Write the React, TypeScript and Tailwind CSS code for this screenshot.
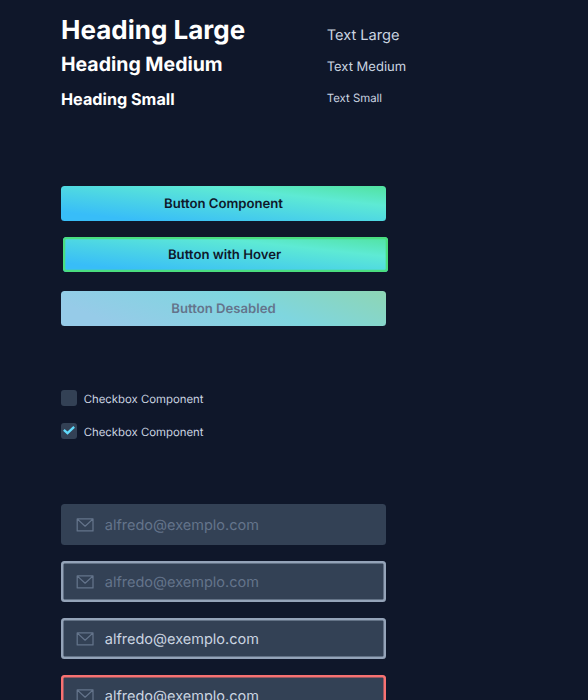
import type { ReactNode } from "react";

const buttonBase =
  "flex w-[325px] items-center justify-center rounded-[3.5px] pt-[2px] text-[13.15px] font-semibold leading-none [text-rendering:inherit]";

const gradient =
  "bg-[linear-gradient(to_top_right,#38bdf8_13%,#5eead4_72%,#4ade80_117%)]";

function Checkbox({ checked = false }: { checked?: boolean }) {
  return (
    <label className="flex h-4 items-center gap-[6.7px] text-[11.37px] leading-4 text-[#cbd5e1]">
      <span className="flex size-4 items-center justify-center rounded-[3px] bg-[#334155]">
        {checked && (
          <svg width="12" height="9" viewBox="0 0 12 9" fill="none">
            <path d="M1.7 4.6 4.5 7.1 10.3 1.6" stroke="#61dafb" strokeWidth="2.3" strokeLinecap="square" />
          </svg>
        )}
      </span>
      <span className="mt-[2px]">Checkbox Component</span>
    </label>
  );
}

function Field({ className, children }: { className: string; children: ReactNode }) {
  return (
    <div className={`flex h-[41px] w-[325px] shrink-0 items-center rounded-[3.5px] bg-[#334155] pl-[14.6px] text-[14.5px] ${className}`}>
      <svg className="mt-px" width="18" height="14" viewBox="0 0 18 14" fill="none" stroke="#64748b" strokeWidth="1.25" strokeLinejoin="round" strokeLinecap="round">
        <path d="M1.2 .9h15.8v12H1.2zM1.4 1.1 9.1 8.2l7.7-7.1" />
      </svg>
      <span className="ml-[11.2px] mt-[3px] leading-5">{children}</span>
    </div>
  );
}

export default function App() {
  return (
    <main className="h-[700px] w-[588px] overflow-hidden bg-[#0f172a] pl-[61px] font-['Inter',sans-serif] [text-rendering:geometricPrecision]">
      <section className="flex h-[185.7px]">
        <div className="w-[265.7px] whitespace-nowrap font-bold text-white">
          <h1 className="mt-[15px] text-[26px] leading-8">Heading Large</h1>
          <h2 className="mt-[5px] text-[19.5px] leading-6">Heading Medium</h2>
          <h3 className="mt-[13px] text-[16.2px] leading-5">Heading Small</h3>
        </div>
        <div className="whitespace-nowrap text-[#cbd5e1]">
          <p className="mt-[25px] text-[14.6px] leading-5">Text Large</p>
          <p className="mt-[12px] text-[13px] leading-5">Text Medium</p>
          <p className="mt-[13px] text-[11.4px] leading-4">Text Small</p>
        </div>
      </section>

      <section className="h-[204.8px] text-[#0f172a]">
        <button className={`${buttonBase} ${gradient} h-[35px]`}>Button Component</button>
        <button className={`${buttonBase} ${gradient} ml-[1.6px] mt-4 h-[35px] pr-px shadow-[inset_0_0_0_2.3px_#4ade80]`}>
          Button with Hover
        </button>
        <button className={`${buttonBase} mt-[19px] h-[35px] bg-[linear-gradient(22deg,#96cbe8_14%,#7fd6df_60%,#8fd6b0_104%)] text-[#64748b]`}>
          Button Desabled
        </button>
      </section>

      <section className="flex h-[113.5px] flex-col gap-[16.5px]">
        <Checkbox />
        <Checkbox checked />
      </section>

      <section className="flex flex-col gap-[15.9px]">
        <Field className="text-[#64748b]">alfredo@exemplo.com</Field>
        <Field className="text-[#64748b] shadow-[inset_0_0_0_2.5px_#94a3b8]">alfredo@exemplo.com</Field>
        <Field className="text-[#cbd5e1] shadow-[inset_0_0_0_2.5px_#94a3b8]">alfredo@exemplo.com</Field>
        <Field className="text-[#cbd5e1] shadow-[inset_0_0_0_2.5px_#f87171]">alfredo@exemplo.com</Field>
      </section>
    </main>
  );
}
